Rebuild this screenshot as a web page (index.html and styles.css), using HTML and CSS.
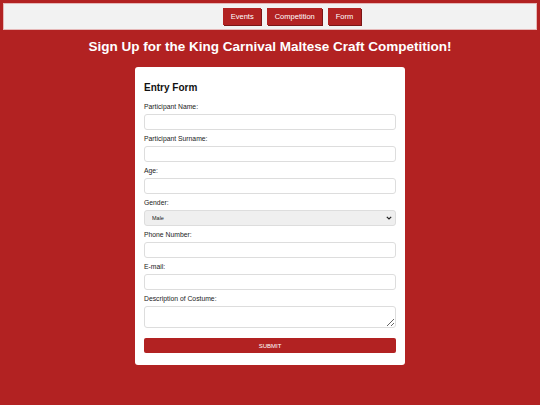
FILE: index.html
```
<!DOCTYPE html>
<html>
<head>
<meta charset="utf-8">
<link rel="stylesheet" href="styles.css">
</head>
<body>
<nav class="nav">
  <a class="nav-btn" href="#">Events</a>
  <a class="nav-btn" href="#">Competition</a>
  <a class="nav-btn" href="#">Form</a>
</nav>
<h1 class="title">Sign Up for the King Carnival Maltese Craft Competition!</h1>
<main class="card">
  <h2 class="card-title">Entry Form</h2>
  <form class="form">
    <label class="label">Participant Name:</label>
    <input class="field" type="text">
    <label class="label">Participant Surname:</label>
    <input class="field" type="text">
    <label class="label">Age:</label>
    <input class="field" type="text">
    <label class="label">Gender:</label>
    <div class="select-wrap">
      <select class="field select"><option>Male</option></select>
      <svg class="chev" width="6" height="4" viewBox="0 0 6 4"><path d="M0.8 0.8 L3 3 L5.2 0.8" fill="none" stroke="#222" stroke-width="1.2"/></svg>
    </div>
    <label class="label">Phone Number:</label>
    <input class="field" type="text">
    <label class="label">E-mail:</label>
    <input class="field" type="text">
    <label class="label">Description of Costume:</label>
    <textarea class="field area"></textarea>
    <button class="submit" type="button">SUBMIT</button>
  </form>
</main>
</body>
</html>
```
FILE: styles.css
```
* { box-sizing: border-box; }
html, body { margin: 0; padding: 0; }
body {
  background: #b22222;
  font-family: "Liberation Sans", Arial, sans-serif;
  padding: 3px 3px 0;
}
.nav {
  background: #f2f2f2;
  border: 1px solid #e6b8b8;
  height: 27px;
  display: flex;
  justify-content: center;
  align-items: center;
  gap: 6px;
  padding-left: 44px;
}
.nav-btn {
  background: #b22222;
  color: #fff;
  text-decoration: none;
  font-size: 7.5px;
  height: 17px;
  padding: 0 7.5px;
  display: flex;
  align-items: center;
  box-shadow: 1px 1px 0 #7a1515;
}
.title {
  color: #fff;
  font-size: 13.5px;
  font-weight: bold;
  text-align: center;
  margin: 8px 0 11px;
  line-height: 18px;
}
.card {
  background: #fff;
  width: 270px;
  margin: 0 auto;
  border-radius: 3px;
  padding: 12px 9px 12px;
}
.card-title {
  font-size: 10px;
  margin: 2px 0 7px;
  line-height: 14px;
  color: #111;
}
.form {
  display: flex;
  flex-direction: column;
}
.label {
  font-size: 6.8px;
  color: #222;
  line-height: 9px;
  margin-bottom: 3px;
}
.field {
  height: 16px;
  border: 1px solid #ddd;
  border-radius: 3px;
  margin: 0 0 4px;
  font-size: 5.5px;
  font-family: "Liberation Sans", Arial, sans-serif;
  background: #fff;
}
.select-wrap {
  position: relative;
  display: flex;
  flex-direction: column;
}
.select {
  -webkit-appearance: none;
  appearance: none;
  background: #efefef;
  padding-left: 7px;
  color: #222;
}
.chev {
  position: absolute;
  right: 4px;
  top: 6px;
}
.area {
  height: 22px;
  margin-bottom: 10px;
  resize: vertical;
}
.submit {
  background: #b22222;
  color: #fff;
  border: none;
  border-radius: 2px;
  height: 15px;
  font-size: 6px;
  font-family: "Liberation Sans", Arial, sans-serif;
}
```
